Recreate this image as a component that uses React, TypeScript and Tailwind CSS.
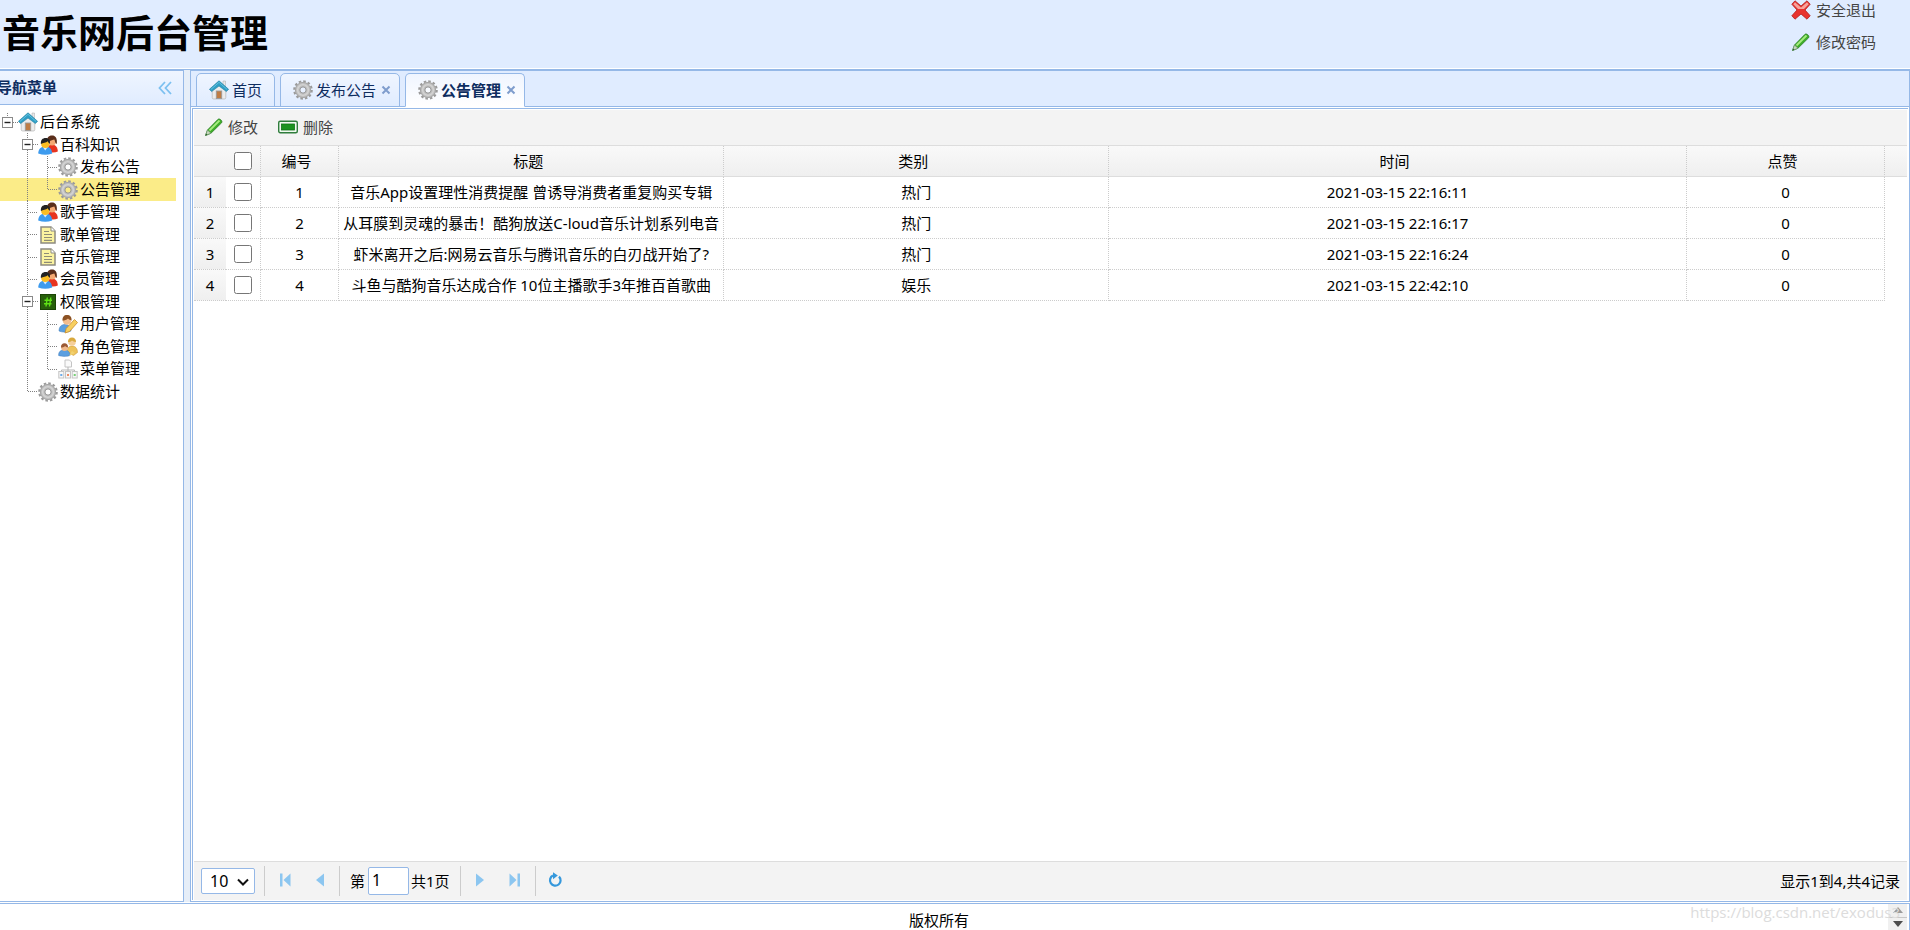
import React, { useState } from 'react'
import clsx from 'clsx'

type IconName =
  | 'home'
  | 'gear'
  | 'users'
  | 'doc'
  | 'hash'
  | 'userEdit'
  | 'roles'
  | 'sitemap'
  | 'pencil'
  | 'remove'
  | 'cross'

const icons: Record<IconName, React.ReactNode> = {
  home: (
    <>
      <path d="M14 1h2.500V7L14 5z" fill="#e8e8e8" stroke="#aaa" strokeWidth=".5" />
      <path d="M3.200 9 10 4l6.800 5v8.500q0 1.500-1.500 1.500H4.700q-1.500 0-1.500-1.500z" fill="#ececec" stroke="#b4b4b4" strokeWidth=".7" />
      <rect x="7.300" y="11" width="5.400" height="7.500" fill="#c07c43" stroke="#9a9a9a" strokeWidth=".9" />
      <path d="M.4 9.300 10 .8l9.600 8.500-2.200 2.300L10 6 2.600 11.600z" fill="#2f9fc6" stroke="#1f7d9f" strokeWidth=".6" />
      <path d="M2 9.400 10 2.300l8 7.100" fill="none" stroke="#6fc8e2" strokeWidth=".8" />
    </>
  ),
  gear: (
    <>
      <circle cx="10" cy="10" r="8.300" fill="none" stroke="#9a9a9a" strokeWidth="3" strokeDasharray="2.400 1.945" />
      <circle cx="10" cy="10" r="5.500" fill="none" stroke="#c0c0c0" strokeWidth="4.800" />
      <circle cx="10" cy="10" r="7.600" fill="none" stroke="#a6a6a6" strokeWidth="1" />
      <circle cx="10" cy="10" r="5.400" fill="none" stroke="#d4d4d4" strokeWidth="1.400" />
      <circle cx="10" cy="10" r="3.100" fill="none" stroke="#8f8f8f" strokeWidth=".9" />
    </>
  ),
  users: (
    <>
      <path d="M9 17c0-5 2-7.500 5-7.500s5.800 2.500 5.800 7q-2 1-5 1z" fill="#e8341f" />
      <circle cx="14" cy="6.500" r="4" fill="#f4a973" />
      <path d="M9 8C8.500 2.500 10.500.4 14 .4s5.500 2.600 4.800 8.600C17 8.500 17.300 6 16.300 4.500 14 5.500 11 5.500 9 8z" fill="#5a2e1b" />
      <path d="M.2 18.500C.4 14 3 11.500 7.200 11.500s6.800 2.500 7 7q-7 2.500-14 0z" fill="#3d9bee" />
      <path d="M4.800 11.900 7.200 15.500l2.600-3.600z" fill="#d7ecff" />
      <circle cx="7.300" cy="9" r="4.100" fill="#fbbd22" />
      <path d="M2.900 9C2.500 5 4.500 3 7.700 3s4.800 2.200 4.200 5.800C10.800 8 10.200 7.200 9.800 6.200 8 7.800 5 7.400 2.900 9z" fill="#222" />
    </>
  ),
  doc: (
    <>
      <path d="M3 2h10l4 4v12H3z" fill="#fbf3a0" stroke="#8d8b80" strokeWidth="1.500" />
      <path d="M13 2v4h4" fill="#fff" stroke="#8d8b80" strokeWidth="1" />
      <path d="M6 6.500h5M6 9.500h8M6 12.500h8M6 15.300h8" stroke="#8d8b76" strokeWidth="1.200" />
    </>
  ),
  hash: (
    <>
      <rect x="2.500" y="2.500" width="15" height="15" fill="#275f0b" stroke="#1b4405" />
      <path d="M9.300 5.500 8 14.500M12.800 5.500 11.500 14.500M6.500 8.300H14M6 11.700h7.500" stroke="#5fe116" strokeWidth="1.400" />
    </>
  ),
  userEdit: (
    <>
      <path d="M1 17c0-4 2-6.500 6-6.500s6 2.500 6 6.500c-3 1.500-9 1.500-12 0z" fill="#5b9fe0" stroke="#417dba" strokeWidth=".5" />
      <circle cx="9" cy="6.500" r="4.300" fill="#f3bd8d" />
      <path d="M4.500 6.500C4.300 3 6 1 9 1s5 2 4.500 5.500C12 6 11 5.500 10 4.500 8.500 6 6.500 6.500 4.500 6.500z" fill="#8c5224" />
      <path d="m16.500 5.500 3 3L11.500 17.500l-4.500 1.500 1.200-4.500z" fill="#f7cf5f" stroke="#c98d2b" strokeWidth=".8" />
    </>
  ),
  roles: (
    <>
      <path d="M9 15c0-4 2-6 5-6s5.500 2 5.500 6.500l-4 3z" fill="#eec35a" stroke="#c4933a" strokeWidth=".5" />
      <circle cx="14" cy="5" r="3.800" fill="#f5cf9b" />
      <path d="M10 5c0-3 1.500-4.500 4-4.500S18 2 18 5c-2 0-3-1-4-1.500C13 4.500 11.500 5 10 5z" fill="#d8a93d" />
      <path d="M.6 18.500c0-4 2-5.500 5.400-5.500s6 1.500 6 5.500c-3 1.200-8.400 1.200-11.400 0z" fill="#5b9fe0" stroke="#417dba" strokeWidth=".5" />
      <circle cx="6.500" cy="10.500" r="3.400" fill="#f0b98c" />
      <path d="M3 10.500C2.800 8 4.200 6.300 6.500 6.300S10.200 8 10 10.500C8.800 10.300 8 10 7.200 9 6 10 4.500 10.500 3 10.500z" fill="#9b5a35" />
      <path d="M11 19l3-5 3 2z" fill="#f2d271" />
    </>
  ),
  sitemap: (
    <>
      <path d="M7 1h4.500L13.500 3v5H7z" fill="#fafafa" stroke="#c4c4c4" />
      <path d="M10 8v3M3.500 13v-2h13v2M10 11v2" fill="none" stroke="#b5b5b5" />
      <rect x=".8" y="12.500" width="5" height="6.500" fill="#f7f7f7" stroke="#c4c4c4" />
      <rect x="7.500" y="12.500" width="5" height="6.500" fill="#f7f7f7" stroke="#c4c4c4" />
      <rect x="14.200" y="12.500" width="5" height="6.500" fill="#f7f7f7" stroke="#c4c4c4" />
      <path d="M2.300 16h2" stroke="#6cabe8" strokeWidth="2" />
      <path d="M9 16h2" stroke="#ee8c62" strokeWidth="2" />
      <path d="M15.700 16h2" stroke="#76cf76" strokeWidth="2" />
    </>
  ),
  pencil: (
    <>
      <path d="M1.500 18.500 3.500 13 14 2.300c1.500-1.300 5 1.700 3.600 3.500L7 16.200z" fill="#3fae29" stroke="#2b7d25" strokeWidth=".8" />
      <path d="M5.500 13.500 15.500 3.500" stroke="#a6ec7f" strokeWidth="1.800" />
      <path d="M1.500 18.500 3.500 13 7 16.200z" fill="#c9d8bd" stroke="#69916a" strokeWidth=".7" />
      <path d="m1.500 18.500.7-2 1.300 1.200z" fill="#2b5d2b" />
    </>
  ),
  remove: (
    <>
      <rect x=".7" y="4.200" width="18.600" height="11.600" rx="1.500" fill="#f2faf2" stroke="#2f7d3c" strokeWidth="1.400" />
      <rect x="3.500" y="7" width="13" height="6" fill="#1b9220" stroke="#117317" strokeWidth=".8" />
    </>
  ),
  cross: (
    <>
      <path
        d="M4 .8 10 6 16 .8l3.200 3.400L14 10l5.200 5.800-3.200 3.400L10 14l-6 5.200-3.200-3.400L6 10 .8 4.200z"
        fill="#e8332f"
        stroke="#b3201f"
        strokeWidth=".8"
        strokeLinejoin="round"
      />
      <path d="M4 2.300 10 7.500l6-5.200 1.700 1.900L13 9H7L2.300 4.200z" fill="#f7a39c" />
    </>
  ),
}

const Icon: React.FC<{ name: IconName }> = ({ name }) => (
  <svg viewBox="0 0 20 20" className="w-5 h-5 shrink-0" aria-hidden="true">
    {icons[name]}
  </svg>
)

type Cell = 'blank' | 'line' | 'join' | 'elbow' | 'root' | 'open'

type Node = {
  text: string
  icon: IconName
  cells: Cell[]
}

const nodes: Node[] = [
  { text: '后台系统', icon: 'home', cells: ['root'] },
  { text: '百科知识', icon: 'users', cells: ['blank', 'open'] },
  { text: '发布公告', icon: 'gear', cells: ['blank', 'line', 'join'] },
  { text: '公告管理', icon: 'gear', cells: ['blank', 'line', 'elbow'] },
  { text: '歌手管理', icon: 'users', cells: ['blank', 'join'] },
  { text: '歌单管理', icon: 'doc', cells: ['blank', 'join'] },
  { text: '音乐管理', icon: 'doc', cells: ['blank', 'join'] },
  { text: '会员管理', icon: 'users', cells: ['blank', 'join'] },
  { text: '权限管理', icon: 'hash', cells: ['blank', 'open'] },
  { text: '用户管理', icon: 'userEdit', cells: ['blank', 'line', 'join'] },
  { text: '角色管理', icon: 'roles', cells: ['blank', 'line', 'join'] },
  { text: '菜单管理', icon: 'sitemap', cells: ['blank', 'line', 'elbow'] },
  { text: '数据统计', icon: 'gear', cells: ['blank', 'elbow'] },
]

const cellPaths: Record<Cell, string> = {
  blank: '',
  line: 'M9.500 0V24',
  join: 'M9.500 0V24M10 11.500H20',
  elbow: 'M9.500 0V12M10 11.500H20',
  root: 'M9.500 2V6M15 11.500H20',
  open: 'M9.500 0V6M9.500 17V24M15 11.500H20',
}

const TreeCell: React.FC<{ type: Cell }> = ({ type }) => {
  const lines = (
    <svg viewBox="0 0 20 23" className="block w-5 h-full" aria-hidden="true">
      <path d={cellPaths[type]} fill="none" stroke="#808080" strokeDasharray="1 1" />
      {(type === 'root' || type === 'open') && (
        <>
          <rect x="4.500" y="6.500" width="10" height="10" fill="#fff" stroke="#8a8a8a" />
          <path d="M6.500 11.500h6" stroke="#222" strokeWidth="1.400" />
        </>
      )}
    </svg>
  )
  if (type === 'root' || type === 'open') {
    return (
      <button type="button" aria-label="折叠" className="w-5 h-[23px] shrink-0">
        {lines}
      </button>
    )
  }
  return <span className="w-5 h-[23px] shrink-0">{lines}</span>
}

const tabs: { text: string; icon: IconName; closable: boolean }[] = [
  { text: '首页', icon: 'home', closable: false },
  { text: '发布公告', icon: 'gear', closable: true },
  { text: '公告管理', icon: 'gear', closable: true },
]

const rows = [
  { id: 1, title: '音乐App设置理性消费提醒 曾诱导消费者重复购买专辑', type: '热门', time: '2021-03-15 22:16:11', like: 0 },
  { id: 2, title: '从耳膜到灵魂的暴击！酷狗放送C-loud音乐计划系列电音', type: '热门', time: '2021-03-15 22:16:17', like: 0 },
  { id: 3, title: '虾米离开之后:网易云音乐与腾讯音乐的白刃战开始了?', type: '热门', time: '2021-03-15 22:16:24', like: 0 },
  { id: 4, title: '斗鱼与酷狗音乐达成合作 10位主播歌手3年推百首歌曲', type: '娱乐', time: '2021-03-15 22:42:10', like: 0 },
]

const Header = () => (
  <header className="shrink-0 border-b border-[#95b8e7] bg-white pb-px">
    <div className="flex justify-between h-[68px] bg-[#e0ecff] overflow-hidden">
      <h1 className="pl-0.5 text-[38px] leading-[64px] font-bold text-black whitespace-nowrap">
        音乐网后台管理
      </h1>
      <div className="flex flex-col pr-[34px] -mt-1.5 text-[#444]">
        <button type="button" className="flex items-center gap-[5px] h-8">
          <Icon name="cross" />
          安全退出
        </button>
        <button type="button" className="flex items-center gap-[5px] h-8">
          <Icon name="pencil" />
          修改密码
        </button>
      </div>
    </div>
  </header>
)

const Sidebar = () => {
  const [selected, setSelected] = useState<string>('公告管理')

  return (
    <aside className="w-[184px] shrink-0 border border-l-0 border-[#95b8e7] bg-white overflow-hidden">
      <div className="flex items-center justify-between h-[34px] pr-2.5 border-b border-[#95b8e7] bg-linear-to-b from-[#eff5ff] to-[#e0ecff]">
        <h2 className="-ml-[3px] pb-0.5 font-bold text-[#0e2d5f]">导航菜单</h2>
        <button type="button" aria-label="收起" className="w-4 h-4">
          <svg viewBox="0 0 16 16" className="w-4 h-4" fill="none" stroke="#7cc0f0" strokeWidth="1.800">
            <path d="M8 2 2.500 8 8 14M14 2 8.500 8 14 14" />
          </svg>
        </button>
      </div>
      <ul className="grid auto-rows-fr h-[292px] mt-1.5 mr-[7px]">
        {nodes.map((node) => (
          <li
            key={node.text}
            className={clsx('flex items-center min-h-0', selected === node.text && 'bg-[#fbec88]')}
          >
            <div className="flex items-center -ml-0.5">
              {node.cells.map((cell, i) => (
                <TreeCell key={i} type={cell} />
              ))}
              <a
                href="#"
                onClick={(e) => {
                  e.preventDefault()
                  setSelected(node.text)
                }}
                className="flex items-center gap-0.5 text-black"
              >
                <Icon name={node.icon} />
                <span className="pb-0.5">{node.text}</span>
              </a>
            </div>
          </li>
        ))}
      </ul>
    </aside>
  )
}

const TabBar = () => {
  const [active, setActive] = useState<string>('公告管理')

  return (
    <div className="flex items-end gap-[5px] h-9 pl-[5px] shrink-0 border-b border-[#95b8e7] bg-[#e0ecff]">
      {tabs.map((tab) => (
        <div
          key={tab.text}
          className={clsx(
            'flex items-center h-[34px] -mb-px rounded-t-[5px] border border-[#95b8e7] bg-linear-to-b from-[#eff5ff] text-[#0e2d5f]',
            active === tab.text ? 'to-white border-b-white font-bold' : 'to-[#e0ecff]',
            tab.closable ? 'pl-3 pr-[7px]' : 'px-3',
          )}
        >
          <button type="button" onClick={() => setActive(tab.text)} className="flex items-center gap-[3px]">
            <Icon name={tab.icon} />
            {tab.text}
          </button>
          {tab.closable && (
            <button type="button" aria-label="关闭" className="ml-1 w-3 h-3">
              <svg viewBox="0 0 12 12" className="w-3 h-3" stroke="#7f9dcd" strokeWidth="2">
                <path d="m2.500 2.500 7 7M9.500 2.500l-7 7" />
              </svg>
            </button>
          )}
        </div>
      ))}
    </div>
  )
}

const thClass =
  'h-[31px] p-0 pr-1.5 border-b border-b-[#ddd] border-r border-r-[#ccc] [border-right-style:dotted] bg-linear-to-b from-[#f9f9f9] to-[#efefef] font-normal'
const tdClass =
  'h-[31px] py-0 px-1 border-r border-b border-dotted border-[#ccc] text-center whitespace-nowrap overflow-hidden'

const Grid = () => (
  <table className="w-full table-fixed border-separate border-spacing-0 text-black">
    <colgroup>
      <col className="w-8" />
      <col className="w-[35px]" />
      <col className="w-[78px]" />
      <col className="w-[22.5%]" />
      <col className="w-[22.45%]" />
      <col className="w-[33.75%]" />
      <col className="w-[11.55%]" />
      <col />
    </colgroup>
    <thead>
      <tr>
        <th className="h-[31px] p-0 border-b border-[#ddd] bg-linear-to-b from-[#f9f9f9] to-[#efefef]" />
        <th className="h-[31px] p-0 border-b border-b-[#ddd] border-r border-r-[#ccc] [border-right-style:dotted] bg-linear-to-b from-[#f9f9f9] to-[#efefef]">
          <input type="checkbox" aria-label="全选" className="block mx-auto w-[18px] h-[18px]" />
        </th>
        <th className={thClass}>编号</th>
        <th className={thClass}>标题</th>
        <th className={thClass}>类别</th>
        <th className={thClass}>时间</th>
        <th className={thClass}>点赞</th>
        <th className="p-0 border-b border-[#ddd] bg-linear-to-b from-[#f9f9f9] to-[#efefef]" />
      </tr>
    </thead>
    <tbody>
      {rows.map((row, i) => (
        <tr key={row.id}>
          <td className="h-[31px] p-0 border-b border-dotted border-[#ccc] bg-linear-to-b from-[#f9f9f9] to-[#efefef] text-center">
            {i + 1}
          </td>
          <td className="h-[31px] p-0 border-r border-b border-dotted border-[#ccc]">
            <input type="checkbox" aria-label={`选择第${i + 1}行`} className="block mx-auto w-[18px] h-[18px]" />
          </td>
          <td className={tdClass}>{row.id}</td>
          <td className={tdClass}>{row.title}</td>
          <td className={tdClass}>{row.type}</td>
          <td className={tdClass}>{row.time}</td>
          <td className={tdClass}>{row.like}</td>
          <td />
        </tr>
      ))}
    </tbody>
  </table>
)

const Separator = () => <span className="w-px h-[30px] mx-0.5 bg-[#ccc]" />

const PageButton: React.FC<{ label: string; children: React.ReactNode }> = ({ label, children }) => (
  <button type="button" aria-label={label} className="flex items-center justify-center w-[35px] h-[30px] pb-0.5">
    <svg viewBox="0 0 16 16" className="w-4 h-4" fill="#8cc6f0">
      {children}
    </svg>
  </button>
)

const Pager = () => {
  const [page, setPage] = useState<string>('1')

  return (
    <div className="flex items-center h-[39px] shrink-0 pl-[7px] pr-[7px] border-t border-[#ddd] bg-[#f3f3f3] text-black">
      <div className="relative mr-[7px]">
        <select
          aria-label="每页条数"
          className="block appearance-none w-[54px] h-[26px] pl-2 rounded-[2px] border border-[#95b8e7] bg-white text-[16px]"
        >
          <option>10</option>
          <option>20</option>
          <option>50</option>
        </select>
        <svg
          viewBox="0 0 12 12"
          className="absolute right-1.5 top-2 w-3 h-3 pointer-events-none"
          fill="none"
          stroke="#111"
          strokeWidth="2"
        >
          <path d="m1 3.500 5 5 5-5" />
        </svg>
      </div>
      <Separator />
      <PageButton label="首页">
        <path d="M3 1.500h2.500v13H3zM13.500 1.500v13L6.500 8z" />
      </PageButton>
      <PageButton label="上一页">
        <path d="M12 1.500v13L4 8z" />
      </PageButton>
      <Separator />
      <label htmlFor="page" className="pl-2 pr-[3px]">
        第
      </label>
      <input
        id="page"
        value={page}
        onChange={(e) => setPage(e.target.value)}
        className="w-[41px] h-7 px-[3px] pb-0.5 rounded-[2px] border border-[#95b8e7] bg-white text-[16px] outline-none"
      />
      <span className="pl-0.5 pr-2">共1页</span>
      <Separator />
      <PageButton label="下一页">
        <path d="M4 1.500v13L12 8z" />
      </PageButton>
      <PageButton label="末页">
        <path d="M2.500 1.500v13l7-6.500zM10.500 1.500H13v13h-2.500z" />
      </PageButton>
      <Separator />
      <PageButton label="刷新">
        <path d="M6 3.600A5.300 5.300 0 1 0 12 4.600" fill="none" stroke="#3598dc" strokeWidth="2.200" />
        <path d="M6 .2v7L10.800 3.500z" fill="#3598dc" />
      </PageButton>
      <span className="ml-auto">显示1到4,共4记录</span>
    </div>
  )
}

const Footer = () => (
  <footer className="relative shrink-0 pt-px bg-white">
    <div className="flex h-[27px] border-t border-r border-[#95b8e7] pr-0.5 overflow-hidden">
      <p className="flex-1 pt-1.5 pr-2.5 text-center text-black">版权所有</p>
      <div className="flex flex-col w-[19px] bg-[#f0f0f0]">
        <button type="button" aria-label="向上" className="flex items-center justify-center h-4 border-b border-[#c8c8c8]">
          <svg viewBox="0 0 10 6" className="w-2.5 h-1.5" fill="#9a9a9a">
            <path d="M0 6 5 0l5 6z" />
          </svg>
        </button>
        <button type="button" aria-label="向下" className="flex items-center justify-center h-3.5">
          <svg viewBox="0 0 10 6" className="w-2.5 h-1.5" fill="#4d4d4d">
            <path d="M0 0h10L5 6z" />
          </svg>
        </button>
      </div>
    </div>
    <span className="absolute right-2.5 top-0 font-['Open_Sans',sans-serif] text-[#dcdcdc] pointer-events-none">
      https://blog.csdn.net/exodus3
    </span>
  </footer>
)

const App = () => {
  return (
    <div className="flex flex-col h-screen overflow-hidden bg-white font-['Noto_Sans','Noto_Sans_CJK_SC',sans-serif] text-[15px] leading-5">
      <Header />
      <main className="flex flex-1 min-h-0 gap-1.5 bg-[#e6eef8]">
        <Sidebar />
        <section className="flex flex-col flex-1 min-w-0 border border-[#95b8e7] bg-white">
          <TabBar />
          <div className="flex flex-col flex-1 min-h-0 mt-px ml-px mr-px pt-px pl-px mb-px pr-px border-t border-l border-[#95b8e7]">
            <div className="flex items-center gap-5 h-9 shrink-0 pl-2.5 pb-0.5 border-b border-[#ddd] bg-[#f3f3f3] text-[#444]">
              <button type="button" className="flex items-center gap-1">
                <Icon name="pencil" />
                修改
              </button>
              <button type="button" className="flex items-center gap-[5px]">
                <Icon name="remove" />
                删除
              </button>
            </div>
            <div className="flex-1 min-h-0 overflow-hidden">
              <Grid />
            </div>
            <Pager />
          </div>
        </section>
      </main>
      <Footer />
    </div>
  )
}

export default App
